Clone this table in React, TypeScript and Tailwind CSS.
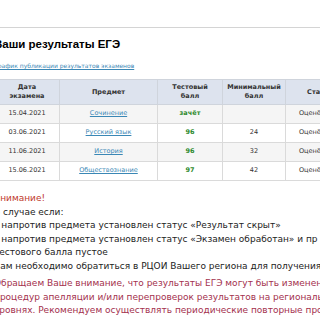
import React from "react";

const rows = [
  { date: "15.04.2021", subj: "Сочинение", score: "зачёт", min: "", status: "Оценён", alt: true },
  { date: "03.06.2021", subj: "Русский язык", score: "96", min: "24", status: "Оценён", alt: false },
  { date: "11.06.2021", subj: "История", score: "96", min: "32", status: "Оценён", alt: true },
  { date: "15.06.2021", subj: "Обществознание", score: "97", min: "42", status: "Оценён", alt: false },
];

export default function App() {
  return (
    <div className="w-[320px] h-[320px] overflow-hidden bg-white" style={{ fontFamily: '"DejaVu Sans", Verdana, sans-serif' }}>
      <div className="h-[27px]" />
      <div className="border-t border-[#d4d4d4] ml-[-6px] w-[420px]">
        <div className="h-[51px] pt-[10px]">
          <h1 className="text-[11.5px] leading-[12px] font-bold text-black" style={{ fontFamily: '"Liberation Sans", Arial, sans-serif' }}>
            Ваши результаты ЕГЭ
          </h1>
          <a className="block mt-[12px] text-[6px] leading-[8px] text-[#3a87b5] underline">
            График публикации результатов экзаменов
          </a>
        </div>
        <table className="w-[359px] table-fixed border-collapse text-[6.5px] text-[#333]">
          <colgroup>
            <col className="w-[65px]" />
            <col className="w-[98px]" />
            <col className="w-[65px]" />
            <col className="w-[63px]" />
            <col className="w-[68px]" />
          </colgroup>
          <thead>
            <tr className="h-[25px] bg-[#dde3ee]">
              <th className="border border-[#cfd4dc] font-bold leading-[9px] align-middle">Дата<br />экзамена</th>
              <th className="border border-[#cfd4dc] font-bold leading-[9px]">Предмет</th>
              <th className="border border-[#cfd4dc] font-bold leading-[9px]">Тестовый<br />балл</th>
              <th className="border border-[#cfd4dc] font-bold leading-[9px]">Минимальный<br />балл</th>
              <th className="border border-[#cfd4dc] font-bold leading-[9px]">Статус</th>
            </tr>
          </thead>
          <tbody>
            {rows.map((r) => (
              <tr key={r.date} className={r.alt ? "h-[19px] bg-[#f5f5f5]" : "h-[19px] bg-white"}>
                <td className="border border-[#dadada] text-center">{r.date}</td>
                <td className="border border-[#dadada] text-center">
                  <a className="text-[#3a87b5] underline">{r.subj}</a>
                </td>
                <td className="border border-[#dadada] text-center font-bold text-[#2e8b2e]">{r.score}</td>
                <td className="border border-[#dadada] text-center">{r.min}</td>
                <td className="border border-[#dadada] text-left pl-[13px]">{r.status}</td>
              </tr>
            ))}
          </tbody>
        </table>
        <div className="mt-[11px] text-[9px] leading-[13.5px] text-[#222] whitespace-nowrap">
          <div className="text-[#c0392b]">Внимание!</div>
          <div>В случае если:</div>
          <div>– напротив предмета установлен статус «Результат скрыт»</div>
          <div>– напротив предмета установлен статус «Экзамен обработан» и пр</div>
          <div>тестового балла пустое</div>
          <div>Вам необходимо обратиться в РЦОИ Вашего региона для получения</div>
          <div className="mt-[4px] text-[#a3304d]">
            <div>Обращаем Ваше внимание, что результаты ЕГЭ могут быть изменен</div>
            <div>процедур апелляции и/или перепроверок результатов на региональ</div>
            <div>уровнях. Рекомендуем осуществлять периодические повторные про</div>
            <div>ЕГЭ.</div>
          </div>
        </div>
      </div>
    </div>
  );
}
